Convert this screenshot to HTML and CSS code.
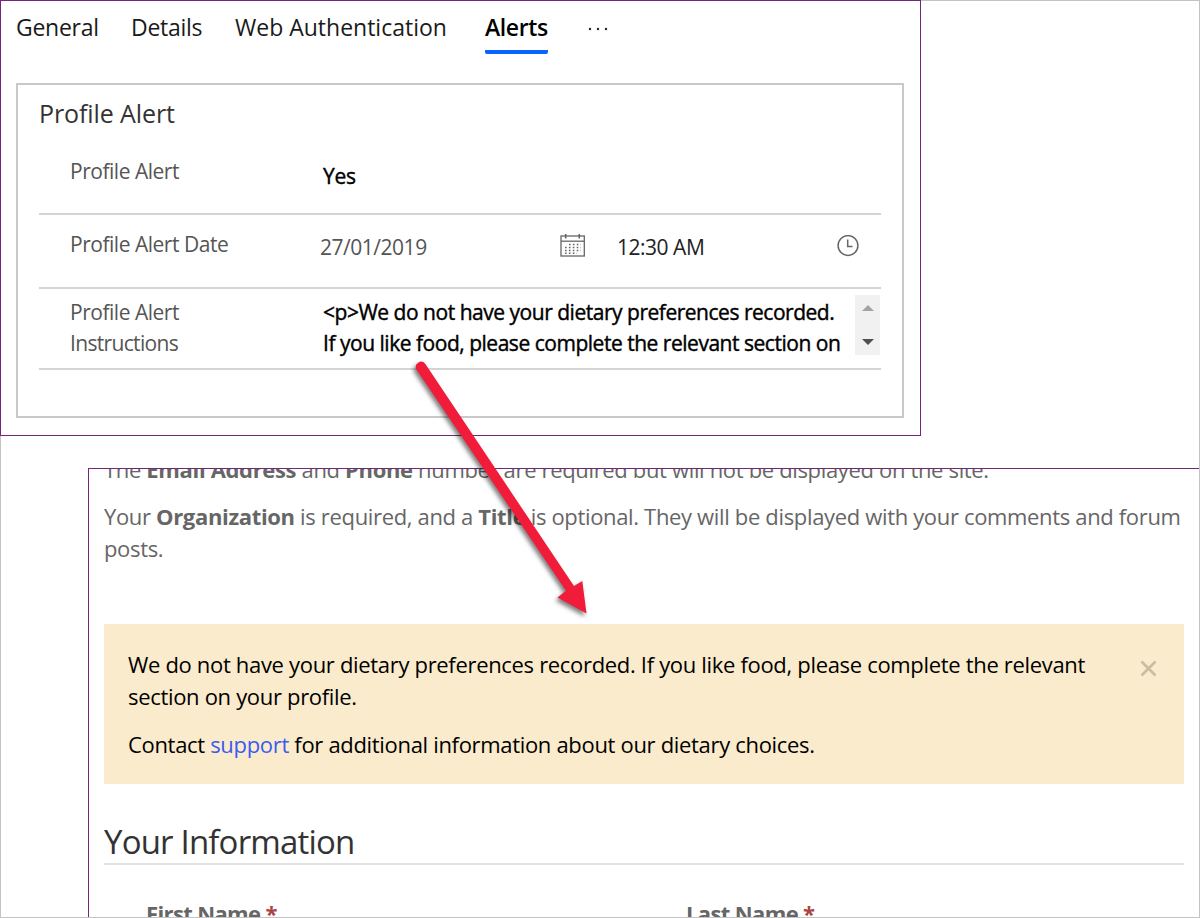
FILE: index.html
```html
<!DOCTYPE html>
<html lang="en">
<head>
<meta charset="utf-8">
<title>Profile Alert</title>
<link rel="stylesheet" href="styles.css">
</head>
<body>
<div class="page">
  <section class="admin">
    <nav class="tabs">
      <a class="tab general">General</a>
      <a class="tab details">Details</a>
      <a class="tab webauth">Web Authentication</a>
      <a class="tab active">Alerts</a>
      <svg class="more" width="20" height="4" viewBox="0 0 20 4"><g fill="#222"><circle cx="2" cy="2" r="1.2"/><circle cx="10" cy="2" r="1.2"/><circle cx="18" cy="2" r="1.2"/></g></svg>
    </nav>
    <div class="card">
      <h2 class="card-title">Profile Alert</h2>
      <div class="row row-flag">
        <div class="label">Profile Alert</div>
        <div class="value strong">Yes</div>
      </div>
      <div class="row row-date">
        <div class="label">Profile Alert Date</div>
        <div class="date">27/01/2019</div>
        <svg class="calendar" width="26" height="24" viewBox="0 0 26 24">
          <g fill="none" stroke="#666" stroke-width="1.3"><rect x="1" y="2" width="23.3" height="20"/><path d="M1 7.2H24.3"/><path d="M5.700 0V4.500M19.300 0V4.500" stroke-width="1.6"/></g>
          <path d="M9 10.500H21M5 13.500H21M5 16.500H21M5 19.300H17" stroke="#666" stroke-width="1.5" stroke-dasharray="1.6 2.3" fill="none"/>
        </svg>
        <div class="time">12:30 AM</div>
        <svg class="clock" width="22" height="22" viewBox="0 0 22 22"><g fill="none" stroke="#666" stroke-width="1.5"><circle cx="11" cy="10.500" r="9.900"/><path d="M10.700 4.500V11.500H15.500"/></g></svg>
      </div>
      <div class="row row-text">
        <div class="label">Profile Alert<br><span class="second">Instructions</span></div>
        <div class="value strong">&lt;p&gt;We do not have your dietary preferences recorded.<br>If you like food, please complete the relevant section on</div>
        <div class="scrollbar"><i class="up"></i><i class="down"></i></div>
      </div>
    </div>
  </section>
  <section class="portal">
    <p class="first">The <b>Email Address</b> and <b>Phone</b> number are required but will not be displayed on the site.</p>
    <p>Your <b>Organization</b> is required, and a <b>Title</b> is optional. They will be displayed with your comments and forum<br>posts.</p>
    <div class="alert">
      <div>
        <p>We do not have your dietary preferences recorded. If you like food, please complete the relevant<br>section on your profile.</p>
        <p>Contact <a>support</a> for additional information about our dietary choices.</p>
      </div>
      <svg class="close" width="17" height="17" viewBox="0 0 17 17"><path d="M1.500 1.500 15.500 15.500M15.500 1.500 1.500 15.500" stroke="#c8bca3" stroke-width="2.6"/></svg>
    </div>
    <h1>Your Information</h1>
    <div class="fields">
      <div class="field">First Name <em>*</em></div>
      <div class="field">Last Name <em>*</em></div>
    </div>
  </section>
  <svg class="arrow" width="200" height="270" viewBox="0 0 200 270">
    <path d="M16.400 9.500 A5.300 5.300 0 0 1 25.200 3.700 L174 226 L182.300 221 L186.500 253.500 L157.500 237.500 L166 230.700 Z" fill="#f01c39"/>
  </svg>
</div>
</body>
</html>
```
FILE: styles.css
```css
* { box-sizing: border-box; }
body { margin: 0; background: #fff; font-family: "Open Sans", "Noto Sans", sans-serif; }
.page { position: relative; width: 1200px; height: 918px; overflow: hidden; display: flex; flex-direction: column; }
.page::after { content: ""; position: absolute; inset: 0; border: 1px solid #c3c3c3; }
.admin { position: relative; z-index: 1; width: 921px; height: 436px; border: 1px solid #73267b; padding: 0 16px 0 15px; flex: none; }
.tabs { display: flex; height: 82px; align-items: flex-start; font-size: 23px; line-height: 32px; color: #1a1a1a; white-space: nowrap; padding-top: 10px; }
.tab { flex: none; letter-spacing: -0.27px; }
.general { width: 115px; }
.details { width: 104px; }
.webauth { width: 250px; letter-spacing: 0; }
.active { width: 63px; height: 43px; font-weight: 600; letter-spacing: -0.4px; color: #000; border-bottom: 4px solid #0a64ff; border-radius: 2px; }
.more { margin: 16px 0 0 40px; }
.card { height: 335px; border: 2px solid #c9c9c9; padding: 0 21px; }
.card-title { margin: 0; padding-top: 12px; height: 57px; font-size: 25px; line-height: 32px; font-weight: 400; letter-spacing: -0.1px; color: #333; }
.row { display: flex; border-bottom: 2px solid #d4d4d4; padding-left: 31px; font-size: 21px; line-height: 31px; letter-spacing: -0.48px; color: #555; white-space: nowrap; }
.row-flag { height: 73px; }
.row-date { height: 74px; }
.row-text { height: 81px; }
.label { width: 250px; flex: none; padding-top: 14px; }
.second { letter-spacing: -0.67px; }
.strong { color: #000; -webkit-text-stroke: 0.4px #000; }
.row-flag .value { padding: 19px 0 0 3px; letter-spacing: -0.3px; }
.date { width: 240px; padding-top: 17px; }
.calendar { margin-top: 19px; margin-right: 31px; }
.time { width: 220px; padding-top: 17px; color: #222; }
.clock { margin-top: 20px; }
.row-text .label { padding-top: 8px; }
.row-text .value { padding: 8px 0 0 3px; width: 535px; flex: none; }
.scrollbar { width: 25px; height: 60px; margin-top: 6px; background: #f1f1f1; display: flex; flex-direction: column; justify-content: space-between; align-items: center; padding: 10px 0; }
.up, .down { border: 6px solid transparent; border-top: 0; border-bottom: 6px solid #a3a3a3; }
.down { border-bottom: 0; border-top: 6px solid #505050; }
.portal { margin: 32px 0 0 88px; width: 1112px; height: 450px; flex: none; border: 1px solid #73267b; border-right: 0; border-bottom: 0; padding: 0 16px 0 15px; overflow: hidden; color: #666; font-size: 22px; line-height: 32px; letter-spacing: -0.34px; }
.portal p { margin: 0; white-space: nowrap; }
.portal .first { margin-top: -16px; margin-bottom: 15px; }
.alert { margin-top: 60px; height: 160px; background: #faebcc; color: #000; padding: 24px 27px 0 24px; display: flex; justify-content: space-between; letter-spacing: -0.32px; }
.alert p + p { margin-top: 16px; }
.alert a { color: #3b5bf0; }
.close { margin-top: 12px; }
h1 { margin: 35px 0 0; height: 46px; border-bottom: 2px solid #e2e2e2; font-size: 33px; line-height: 46px; font-weight: 400; letter-spacing: -0.82px; color: #333; white-space: nowrap; }
.fields { display: flex; padding-left: 42px; margin-top: 32px; font-weight: 700; letter-spacing: -0.63px; }
.field { width: 540px; flex: none; }
.field em { color: #a94442; font-style: normal; }
.arrow { position: absolute; left: 400px; top: 360px; z-index: 3; filter: drop-shadow(-2px 3px 2px rgba(0,0,0,.5)); }
```
